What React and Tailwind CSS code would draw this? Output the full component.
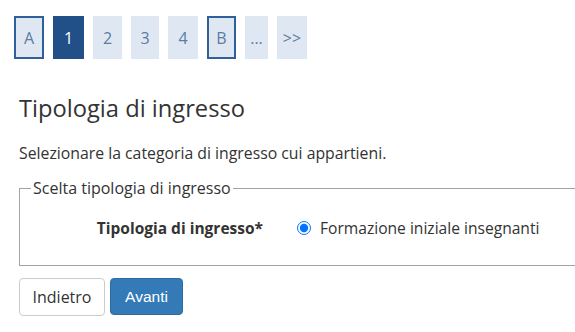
import { useState } from 'react';

const pages = [
  { label: 'A', kind: 'outlined', w: 'w-[30px]' },
  { label: '1', kind: 'active', w: 'w-[31px]' },
  { label: '2', kind: 'plain', w: 'w-[29px]' },
  { label: '3', kind: 'plain', w: 'w-[28px]' },
  { label: '4', kind: 'plain', w: 'w-[30px]' },
  { label: 'B', kind: 'outlined', w: 'w-[29px]' },
  { label: '...', kind: 'plain', w: 'w-[23px]' },
  { label: '>>', kind: 'plain', w: 'w-[30px]' },
];

function PageItem({ item }) {
  const base = 'h-[43px] flex items-center justify-center text-[16px]';
  const look =
    item.kind === 'active'
      ? 'bg-[#215089] text-white'
      : item.kind === 'outlined'
      ? 'bg-[#dfe8f2] text-[#5b7ca3] border-2 border-[#2f609c]'
      : 'bg-[#dfe8f2] text-[#5b7ca3]';
  return <div className={`${base} ${item.w} ${look}`}>{item.label}</div>;
}

export default function App() {
  const [tipo, setTipo] = useState('fii');

  return (
    <div className="w-[575px] h-[332px] overflow-hidden bg-white text-[#333] font-['Open_Sans',sans-serif]">
      {/* Pagination */}
      <div className="flex gap-[9px] pt-[16px] pl-[14px]">
        {pages.map((p, i) => (
          <PageItem key={i} item={p} />
        ))}
      </div>

      <div className="pl-[19px]">
        <h1 className="mt-[33px] text-[23.7px] leading-[32px] font-normal">Tipologia di ingresso</h1>
        <p className="mt-[18px] text-[15.8px] leading-[22px]">
          Selezionare la categoria di ingresso cui appartieni.
        </p>

        <fieldset className="mt-[13px] w-[600px] border border-[#a3a3a3] pl-[11px] pb-[26px]">
          <legend className="px-[2px] text-[16px] leading-[22px]">Scelta tipologia di ingresso</legend>
          <div className="mt-[18px] flex items-center text-[15.6px] leading-[22px]">
            <div className="w-[232px] text-right font-bold text-[15.5px]">Tipologia di ingresso*</div>
            <label className="ml-[34px] flex items-center">
              <input
                type="radio"
                name="tipo"
                checked={tipo === 'fii'}
                onChange={() => setTipo('fii')}
                className="w-[14px] h-[14px] m-0 accent-[#0075ff]"
              />
              <span className="ml-[9px]">Formazione iniziale insegnanti</span>
            </label>
          </div>
        </fieldset>

        <div className="mt-[12px] flex gap-[5px]">
          <button className="w-[86px] h-[38px] rounded-[4px] border border-[#ccc] bg-white text-[16px] text-[#333]">
            Indietro
          </button>
          <button className="w-[73px] h-[37px] rounded-[4px] border border-[#2e6da4] bg-[#337ab7] text-[15.5px] text-white font-['Liberation_Sans',Arial,sans-serif]">
            Avanti
          </button>
        </div>
      </div>
    </div>
  );
}
